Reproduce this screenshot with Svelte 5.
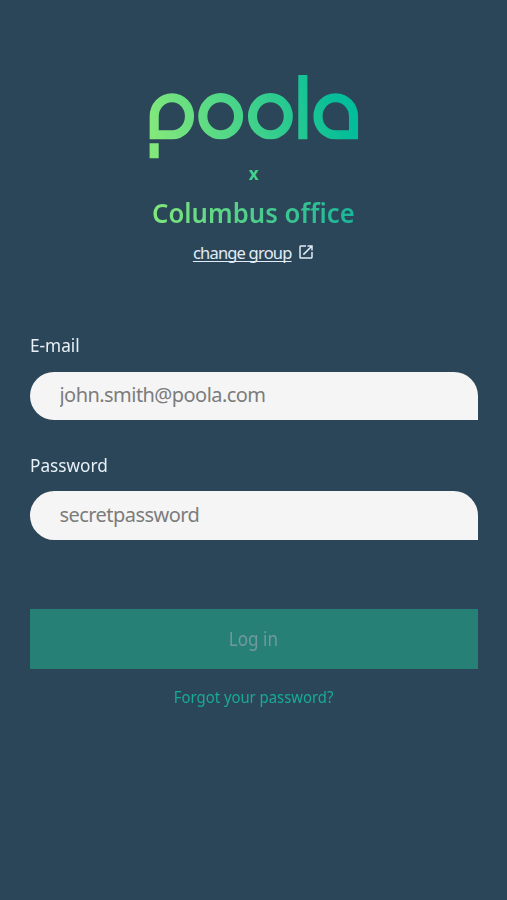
<script>
  let email = $state('');
  let password = $state('');
</script>

<main>
  <header>
    <svg class="logo" viewBox="0 0 210 84" role="img" aria-label="poola">
      <defs>
        <linearGradient id="brand" gradientUnits="userSpaceOnUse" x1="12" y1="84" x2="190" y2="26">
          <stop offset="0" stop-color="#83e87b" />
          <stop offset="1" stop-color="#04bd99" />
        </linearGradient>
      </defs>
      <g fill="none" stroke="url(#brand)" stroke-width="9.1">
        <path d="M5.2 59.8V41.3A17.8 18.6 0 0 1 23 22.7C33 22.7 40.5 31 40.5 41.3S33 59.8 23 59.8Z" />
        <ellipse cx="71.7" cy="41.2" rx="17.9" ry="18.6" />
        <ellipse cx="121.4" cy="41.2" rx="17.9" ry="18.6" />
        <path d="M204.5 59.8V41.3A17.9 18.6 0 0 0 186.7 22.7C176.5 22.7 169 31 169 41.3S176.5 59.8 186.7 59.8Z" />
      </g>
      <path fill="url(#brand)" d="M149.3 0h9.1v64.3h-9.1zM.6 68.3h9.1v15H.6z" />
    </svg>
    <div class="cross">x</div>
    <h1><span>Columbus office</span></h1>
    <a class="change" href="#group">
      <span>change group</span>
      <svg viewBox="0 0 24 24" aria-hidden="true">
        <path fill="currentColor" d="M19 19H5V5h7V3H5a2 2 0 0 0-2 2v14a2 2 0 0 0 2 2h14c1.1 0 2-.9 2-2v-7h-2v7zM14 3v2h3.59l-9.83 9.83 1.41 1.41L19 6.41V10h2V3h-7z" />
      </svg>
    </a>
  </header>

  <form onsubmit={(event) => event.preventDefault()}>
    <label for="email"><span>E-mail</span></label>
    <input id="email" type="email" placeholder="john.smith@poola.com" bind:value={email} />
    <label for="password"><span>Password</span></label>
    <input id="password" type="password" placeholder="secretpassword" bind:value={password} />
    <button disabled={!email || !password}><span>Log in</span></button>
  </form>
  <a class="forgot" href="#reset"><span>Forgot your password?</span></a>
</main>

<style>
  :global(body) { background: #2b4659; }
  main {
    box-sizing: border-box;
    height: 900px;
    padding: 75px 29.5px 0 30px;
    overflow: hidden;
    background: #2b4659;
    font-family: "Noto Sans", sans-serif;
    display: flex;
    flex-direction: column;
  }
  header { display: flex; flex-direction: column; align-items: center; }
  .logo { width: 210px; height: 84px; display: block; }
  .cross { height: 30px; line-height: 30px; font-size: 17px; font-weight: 700; color: #42d38d; }
  h1 { margin: 4px 0 0; height: 40px; line-height: 40px; font-size: 27.5px; font-weight: 600; white-space: nowrap; }
  h1 span {
    display: inline-block;
    transform: scaleX(.935);
    color: transparent;
    background: linear-gradient(100deg, #83e87b, #18b49b);
    background-clip: text;
    -webkit-background-clip: text;
  }
  .change { display: flex; align-items: center; gap: 5px; height: 24px; margin-top: 7px; font-size: 16.5px; color: #e2ecf6; text-decoration: none; white-space: nowrap; }
  .change span { text-decoration: underline; text-decoration-thickness: 1px; text-underline-offset: 2px; text-decoration-skip-ink: none; letter-spacing: -.8px; }
  .change svg { width: 18px; height: 18px; }
  form { display: flex; flex-direction: column; margin-top: 68px; }
  label { height: 26px; line-height: 26px; font-size: 18.5px; color: #e8f0f7; }
  label span { display: inline-block; transform-origin: left; transform: scaleX(.93); }
  input {
    box-sizing: border-box;
    width: 100%;
    height: 48.5px;
    margin: 13.5px 0 31.5px;
    padding: 0 29.5px 2px;
    border: 0;
    outline: 0;
    border-radius: 25px 25px 0 25px;
    background: #f5f5f5;
    color: #555;
    font: 20px "Noto Sans", sans-serif;
    letter-spacing: -.55px;
  }
  input::placeholder { color: #7c7c7c; opacity: 1; }
  button { height: 60.5px; margin: 37.5px 0 0; padding: 0; border: 0; background: #278076; color: #7298a0; font: 19px "Noto Sans", sans-serif; }
  button span { display: inline-block; transform: scaleX(.9); }
  .forgot { align-self: center; height: 24px; line-height: 24px; margin-top: 16px; font-size: 16.5px; color: #18ab93; text-decoration: none; white-space: nowrap; }
  .forgot span { display: inline-block; transform: scaleX(.9); }
</style>
